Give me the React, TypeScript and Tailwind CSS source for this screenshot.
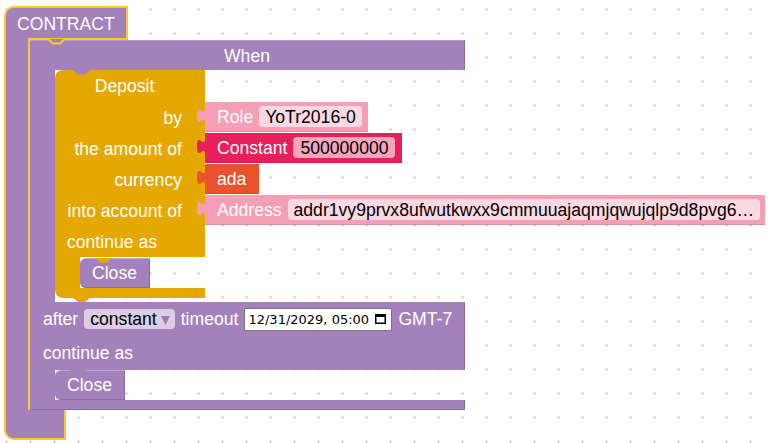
import type { ReactNode } from "react";

const PURPLE = "#a481bb";
const GOLD = "#e5a800";
const PINK = "#f49fb5";
const CRIMSON = "#e91f5b";
const ORANGE = "#e9522c";

function GridDots() {
  return (
    <svg className="absolute inset-0" width="772" height="443">
      <defs>
        <pattern id="grid" x="5" y="8" width="24" height="24" patternUnits="userSpaceOnUse">
          <rect x="0" y="1" width="3" height="1" fill="#d2d2d2" />
          <rect x="1" y="0" width="1" height="3" fill="#d2d2d2" />
        </pattern>
      </defs>
      <rect width="772" height="443" fill="url(#grid)" />
    </svg>
  );
}

// notch cut into the top edge of a statement block, filled with the parent's colour
function Dip({ fill, stroke, className }: { fill: string; stroke?: string; className: string }) {
  return (
    <svg className={`absolute ${className}`} width="17" height="8" viewBox="0 0 17 8">
      <path d="M0 1 L5 5.5 L12 5.5 L17 1 Z" fill={fill} />
      {stroke && <path d="M0 1 L5 5.5 L12 5.5 L17 1" fill="none" stroke={stroke} strokeWidth="2" />}
    </svg>
  );
}

// output tab on the left of a value block
function Tab({ fill }: { fill: string }) {
  return (
    <svg className="absolute left-[-8px] top-0" width="9" height="30" viewBox="0 0 9 30">
      <path d="M9 6 L8 6 c0 10 -8 -8 -8 7.5 s8 -2.5 8 7.5 L9 21 Z" fill={fill} />
    </svg>
  );
}

function Field({ children, className }: { children: ReactNode; className: string }) {
  return (
    <div className={`h-[21px] px-[6px] pt-[2px] rounded-[4px] flex items-center text-black ${className}`}>{children}</div>
  );
}

function ValueBlock({ fill, className, children }: { fill: string; className: string; children: ReactNode }) {
  return (
    <div className={`relative h-[30px] flex items-center gap-[6px] pl-[12px] border-b border-black/10 ${className}`}>
      <Tab fill={fill} />
      {children}
    </div>
  );
}

function CloseBlock({ dip }: { dip: string }) {
  return (
    <div className="relative w-[70px] h-[30px] bg-[#a481bb] rounded-l-[6px] border-t border-r border-b border-t-[#bea6cf] border-r-[#8b6b9f] border-b-[#8b6b9f] flex items-center pl-[12px] pt-[2px]">
      <Dip fill={dip} className="left-[15px] top-[-2px]" />
      Close
    </div>
  );
}

function InputRow({ label, children }: { label: string; children: ReactNode }) {
  return (
    <div className="flex h-[31px] items-start">
      <div className="w-[150px] h-[31px] shrink-0 bg-[#e5a800] flex items-center justify-end pr-[23px] pt-[2px]">{label}</div>
      {children}
    </div>
  );
}

function DepositBlock() {
  return (
    <div className="relative mb-[4px] flex flex-col items-start">
      <Dip fill={PURPLE} className="left-[18px] top-[-1px]" />
      <div className="w-[150px] h-[32px] bg-[#e5a800] rounded-tl-[8px] flex items-center justify-center pl-[12px] pr-[23px] pt-[2px]">
        Deposit
      </div>
      <InputRow label="by">
        <ValueBlock fill={PINK} className="bg-[#f49fb5] pr-[6px]">
          <span className="pt-[2px]">Role</span>
          <Field className="bg-[#fbd9e2]">YoTr2016-0</Field>
        </ValueBlock>
      </InputRow>
      <InputRow label="the amount of">
        <ValueBlock fill={CRIMSON} className="bg-[#e91f5b] pr-[7px]">
          <span className="pt-[2px]">Constant</span>
          <Field className="bg-[#f6a5bd] pl-[7px]">500000000</Field>
        </ValueBlock>
      </InputRow>
      <InputRow label="currency">
        <ValueBlock fill={ORANGE} className="bg-[#e9522c] pr-[13px]">
          <span className="pt-[2px]">ada</span>
        </ValueBlock>
      </InputRow>
      <InputRow label="into account of">
        <ValueBlock fill={PINK} className="bg-[#f49fb5] pr-[5px]">
          <span className="pt-[2px]">Address</span>
          <Field className="bg-[#fbd9e2]">addr1vy9prvx8ufwutkwxx9cmmuuajaqmjqwujqlp9d8pvg6…</Field>
        </ValueBlock>
      </InputRow>
      <div className="w-[150px] h-[31px] bg-[#e5a800] flex items-center pl-[12px] pt-[2px]">continue as</div>
      <div className="flex h-[31px] items-end">
        <div className="w-[25px] h-[31px] bg-[#e5a800]" />
        <CloseBlock dip={GOLD} />
      </div>
      <div className="w-[150px] h-[10px] bg-[#e5a800] rounded-bl-[8px]" />
      <svg className="absolute top-full left-[18px]" width="17" height="5" viewBox="0 0 17 5">
        <path d="M0 0 L5 4 L12 4 L17 0 Z" fill={GOLD} />
      </svg>
    </div>
  );
}

function DateField() {
  return (
    <div className="w-[148px] h-[23px] bg-white border border-[#767676] rounded-[2px] flex items-center justify-between pl-[3px] pr-[5px] text-black font-['DejaVu_Sans',sans-serif] text-[13px]">
      <span>12/31/2029, 05:00</span>
      <svg width="11" height="10" viewBox="0 0 11 10">
        <rect x="0.75" y="0.75" width="9.5" height="8.5" fill="none" stroke="#000" strokeWidth="1.5" />
        <rect x="0" y="0" width="11" height="3" fill="#000" />
      </svg>
    </div>
  );
}

function WhenBlock() {
  return (
    <div className="relative w-[435px] flex flex-col">
      <Dip fill={PURPLE} stroke="#fdc630" className="left-[18px] top-[-2px]" />
      <div className="h-[30px] bg-[#a481bb] border-t border-t-[#b99cca] border-r border-r-[#8b6b9f] flex items-center justify-center pt-[2px]">
        When
      </div>
      <div className="flex">
        <div className="w-[25px] shrink-0 bg-[#a481bb]" />
        <DepositBlock />
      </div>
      <div className="h-[34px] bg-[#a481bb] border-r border-r-[#8b6b9f] flex items-center gap-[6px] pl-[13px]">
        <span className="pt-[2px]">after</span>
        <div className="h-[20px] rounded-[4px] bg-[#dccde5] flex items-center pl-[6px] pr-[5px] pt-[2px] text-black">
          constant
          <svg className="ml-[4px]" width="9" height="10" viewBox="0 0 9 10">
            <polygon points="0,1 9,1 4.5,10" fill="#9a7db0" />
          </svg>
        </div>
        <span className="pt-[2px]">timeout</span>
        <DateField />
        <span className="pt-[2px]">GMT-7</span>
      </div>
      <div className="h-[34px] bg-[#a481bb] border-r border-r-[#8b6b9f] flex items-center pl-[13px] pt-[2px]">continue as</div>
      <div className="flex h-[30px]">
        <div className="w-[25px] shrink-0 bg-[#a481bb]" />
        <CloseBlock dip={PURPLE} />
      </div>
      <div className="h-[10px] bg-[#a481bb] border-r border-b border-[#8b6b9f]" />
    </div>
  );
}

function ContractBlock() {
  return (
    <div className="flex flex-col">
      <div className="w-[124px] h-[34px] bg-[#a481bb] border-2 border-b-0 border-[#fdc630] rounded-tl-[10px] flex flex-col">
        <div className="h-[30px] flex items-center pl-[11px] pt-[4px]">CONTRACT</div>
        <div className="h-[2px] ml-[22px] bg-[#fdc630]" />
      </div>
      <div className="flex">
        <div className="w-[26px] shrink-0 bg-[#a481bb] border-x-2 border-[#fdc630]" />
        <WhenBlock />
      </div>
      <div className="w-[62px] h-[30px] bg-[#a481bb] border-2 border-t-0 border-[#fdc630] rounded-bl-[10px]" />
    </div>
  );
}

export default function App() {
  return (
    <div className="relative w-[772px] h-[443px] overflow-hidden bg-white font-['Liberation_Sans',Arial,sans-serif] text-[17.6px] leading-none text-white">
      <GridDots />
      <div className="absolute left-[4px] top-[6px]">
        <ContractBlock />
      </div>
    </div>
  );
}
